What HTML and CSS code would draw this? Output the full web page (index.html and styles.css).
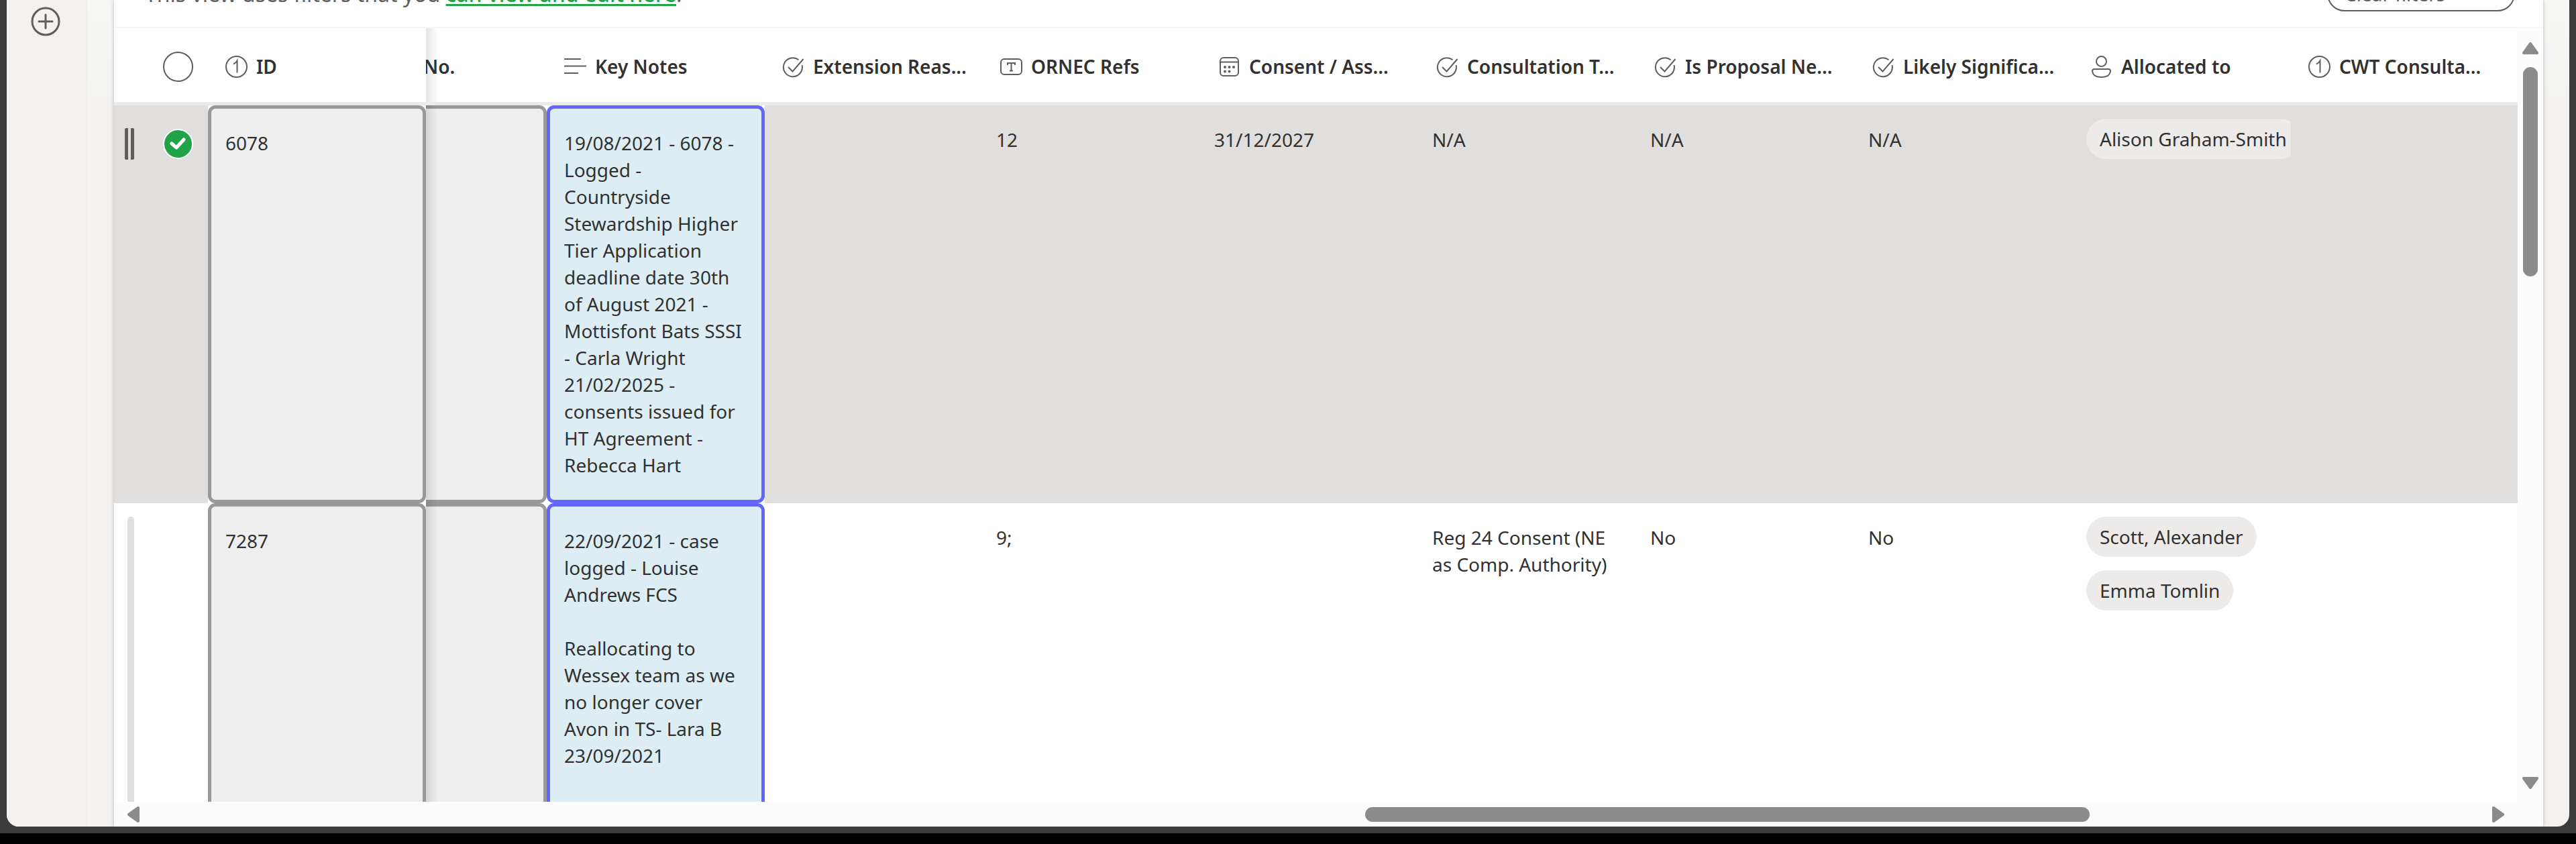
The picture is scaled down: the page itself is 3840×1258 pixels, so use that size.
FILE: index.html
```html
<!DOCTYPE html>
<html lang="en">
<head>
<meta charset="utf-8">
<title>Casework list</title>
<link rel="stylesheet" href="styles.css">
</head>
<body>
<svg class="defs" aria-hidden="true">
  <symbol id="i-number" viewBox="0 0 33 33"><circle cx="16.500" cy="16.500" r="15.500"/><path d="M12 12.500Q15.500 11 17.500 7.500V25.500"/></symbol>
  <symbol id="i-lines" viewBox="0 0 33 33"><path d="M0 5H25M0 15.500H33M0 26H21"/></symbol>
  <symbol id="i-choice" viewBox="0 0 33 33"><path d="M24.500 6.200A14 14 0 1 0 29.500 14M9 17l6.500 6.500L31.500 5"/></symbol>
  <symbol id="i-text" viewBox="0 0 33 33"><rect x="1" y="5" width="31" height="23" rx="5"/><path d="M11 14V11H22V14M16.500 11V22.500M14 22.500H19"/></symbol>
  <symbol id="i-date" viewBox="0 0 33 33"><rect x="3" y="3" width="27" height="27" rx="5"/><path d="M3 9.500H30"/><g class="dots"><circle cx="10" cy="17" r="2"/><circle cx="16.500" cy="17" r="2"/><circle cx="23" cy="17" r="2"/><circle cx="10" cy="23.500" r="2"/><circle cx="16.500" cy="23.500" r="2"/></g></symbol>
  <symbol id="i-person" viewBox="0 0 33 33"><circle cx="16.500" cy="8.500" r="7.500"/><path d="M6 20H27Q30 20 30 23Q29 32 16.500 32Q4 32 3 23Q3 20 6 20Z"/></symbol>
</svg>
<div class="window">
  <nav class="rail">
    <button class="add" aria-label="Add">
      <svg viewBox="0 0 44 44"><circle cx="22" cy="22" r="20"/><path d="M22 12V32M12 22H32"/></svg>
    </button>
  </nav>
  <main class="panel">
    <div class="filterbar">
      <p>This view uses filters that you <a href="#">can view and edit here</a>.</p>
      <button class="clear">Clear filters</button>
    </div>
    <div class="viewport">
      <div class="scroller">
        <table class="list">
          <colgroup>
            <col class="c-select"><col class="c-data"><col class="c-part"><col class="c-data"><col class="c-data"><col class="c-data"><col class="c-data"><col class="c-data"><col class="c-data"><col class="c-data"><col class="c-data"><col>
          </colgroup>
          <thead>
            <tr>
              <th><label class="pick"><input type="checkbox" aria-label="Select all"></label></th>
              <th><div class="head"><svg><use href="#i-number"/></svg><span>ID</span></div></th>
              <th class="under"><div class="head cut"><span>No.</span></div></th>
              <th><div class="head"><svg><use href="#i-lines"/></svg><span>Key Notes</span></div></th>
              <th><div class="head"><svg><use href="#i-choice"/></svg><span>Extension Reas...</span></div></th>
              <th><div class="head"><svg><use href="#i-text"/></svg><span>ORNEC Refs</span></div></th>
              <th><div class="head"><svg><use href="#i-date"/></svg><span>Consent / Ass...</span></div></th>
              <th><div class="head"><svg><use href="#i-choice"/></svg><span>Consultation T...</span></div></th>
              <th><div class="head"><svg><use href="#i-choice"/></svg><span>Is Proposal Ne...</span></div></th>
              <th><div class="head"><svg><use href="#i-choice"/></svg><span>Likely Significa...</span></div></th>
              <th><div class="head"><svg><use href="#i-person"/></svg><span>Allocated to</span></div></th>
              <th><div class="head"><svg><use href="#i-number"/></svg><span>CWT Consulta...</span></div></th>
            </tr>
          </thead>
          <tbody>
            <tr class="selected">
              <td class="tools"><div class="toolset"><span class="grip"></span><label class="pick"><input type="checkbox" checked aria-label="Select 6078"></label></div></td>
              <td class="box">6078</td>
              <td class="box flat under"></td>
              <td class="box notes">19/08/2021 - 6078 -<br>Logged -<br>Countryside<br>Stewardship Higher<br>Tier Application<br>deadline date 30th<br>of August 2021 -<br>Mottisfont Bats SSSI<br>- Carla Wright<br>21/02/2025 -<br>consents issued for<br>HT Agreement -<br>Rebecca Hart</td>
              <td></td>
              <td>12</td>
              <td>31/12/2027</td>
              <td>N/A</td>
              <td>N/A</td>
              <td>N/A</td>
              <td class="people"><div class="chips"><span class="chip">Alison Graham-Smith</span></div></td>
              <td></td>
            </tr>
            <tr>
              <td class="tools"><div class="bar"></div></td>
              <td class="box">7287</td>
              <td class="box flat under"></td>
              <td class="box notes">22/09/2021 - case<br>logged - Louise<br>Andrews FCS<br><br>Reallocating to<br>Wessex team as we<br>no longer cover<br>Avon in TS- Lara B<br>23/09/2021<br><br>View</td>
              <td></td>
              <td>9;</td>
              <td></td>
              <td>Reg 24 Consent (NE<br>as Comp. Authority)</td>
              <td>No</td>
              <td>No</td>
              <td class="people"><div class="chips"><span class="chip">Scott, Alexander</span><span class="chip">Emma Tomlin</span></div></td>
              <td></td>
            </tr>
          </tbody>
        </table>
      </div>
      <div class="vbar">
        <svg viewBox="0 0 24 18"><path d="M12 2L22 16H2Z"/></svg>
        <div class="thumb"></div>
        <svg viewBox="0 0 24 18"><path d="M12 16L22 2H2Z"/></svg>
      </div>
    </div>
    <div class="hbar">
      <svg viewBox="0 0 18 24"><path d="M2 12L16 2V22Z"/></svg>
      <div class="track"><div class="thumb"></div></div>
      <svg viewBox="0 0 18 24"><path d="M16 12L2 2V22Z"/></svg>
    </div>
  </main>
</div>
<div class="edge"></div>
</body>
</html>
```

FILE: styles.css
```css
* { box-sizing: border-box; }

body {
  margin: 0;
  height: 100vh;
  display: flex;
  flex-direction: column;
  overflow: hidden;
  background: #3b3b3b;
  color: #323130;
  font: 28px/40px "Noto Sans", "Open Sans", sans-serif;
}

.defs { display: none; }

svg { fill: none; stroke: #605e5c; stroke-width: 2; }

.window {
  flex: 1;
  min-height: 0;
  display: flex;
  margin: 0 10px 10px;
  padding-right: 39px;
  overflow: hidden;
  border-radius: 0 0 18px 18px;
  background: linear-gradient(#f7f7f6, #f3f2f1 160px);
}

.edge { height: 16px; background: #000; }

.rail {
  width: 120px;
  margin-right: 40px;
  border-right: 1px solid #e9e8e7;
  background: #f3f2f1;
}

.add {
  display: block;
  width: 44px;
  height: 44px;
  margin: 10px 36px;
  padding: 0;
  border: 0;
  background: none;
}

.add svg { display: block; stroke-width: 3; stroke-linecap: round; }

.panel {
  flex: 1;
  min-width: 0;
  display: flex;
  flex-direction: column;
  background: #fff;
  box-shadow: 0 0 6px rgba(0, 0, 0, .25);
}

/* The bar is scrolled partly out of view. */
.filterbar {
  display: flex;
  align-items: center;
  justify-content: space-between;
  flex: none;
  height: 100px;
  margin-top: -58px;
  padding: 0 42px 0 46px;
  border-bottom: 2px solid #f6f6f6;
}

.filterbar p { margin: 0; font-size: 32px; line-height: 40px; color: #605e5c; }
.filterbar a {
  color: #22a347;
  font-weight: 500;
  text-decoration-thickness: 3px;
  text-underline-offset: 3px;
}

.clear {
  width: 280px;
  height: 52px;
  padding: 0 24px;
  border: 2px solid #605e5c;
  border-radius: 26px;
  background: #fff;
  color: #605e5c;
  font: inherit;
  text-align: left;
}

.viewport { flex: 1; min-height: 0; display: flex; }
.scroller { flex: 1; min-width: 0; overflow: hidden; }

.list { width: 100%; table-layout: fixed; border-collapse: separate; border-spacing: 0; }
.c-select { width: 140px; }
.c-data { width: 325px; }
.c-part { width: 180px; }

th { height: 115px; padding: 4px 0 0; border-bottom: 5px solid #eaeaea; }
td { position: relative; padding: 31px 20px; vertical-align: top; }

.head {
  display: flex;
  align-items: center;
  gap: 13px;
  padding-left: 26px;
  font-weight: 600;
  white-space: nowrap;
}
.head svg { flex: none; width: 33px; height: 33px; }
.dots { fill: #605e5c; stroke: none; }
.cut { padding-left: 0; overflow: hidden; text-indent: -4px; }

.selected { background: #e0dfdd; }

.pick { display: flex; padding-left: 73px; }
.pick input {
  appearance: none;
  width: 45px;
  height: 45px;
  margin: 0;
  border: 2px solid #605e5c;
  border-radius: 50%;
}
.pick input:checked {
  border-color: #fff;
  background: #22a347 url("data:image/svg+xml,%3Csvg xmlns='http://www.w3.org/2000/svg' viewBox='0 0 41 41' fill='none' stroke='white' stroke-width='5' stroke-linecap='round' stroke-linejoin='round'%3E%3Cpath d='M11 20L18 26L29 14'/%3E%3C/svg%3E");
}

.tools { padding: 34px 0 0 16px; }
.toolset { display: flex; align-items: center; }
.toolset .pick { padding-left: 43px; }
.grip { width: 14px; height: 47px; border: solid #605e5c; border-width: 0 5px; border-radius: 2px; }
.bar {
  position: absolute;
  inset: 20px auto 0 20px;
  width: 10px;
  border-radius: 5px 5px 0 0;
  background: #e0dfdd;
}

.box { z-index: 0; padding: 36px 0 37px 26px; background: #fff; white-space: nowrap; }
.box::before {
  content: "";
  position: absolute;
  z-index: -1;
  inset: 0;
  border: 5px solid #999;
  border-radius: 11px;
  background: #eee;
}
.flat::before { border-left: 0; border-radius: 0 11px 11px 0; }
.notes::before { border-color: #6464ff; background: #dcedf3; }

/* Shadow that the frozen columns cast on the scrolled one. */
.under { position: relative; }
.under::after {
  content: "";
  position: absolute;
  inset: 0 auto 0 0;
  width: 18px;
  background: linear-gradient(90deg, rgba(0, 0, 0, .1), transparent);
}

.people { padding: 20px 0 0 20px; }
.chips { display: flex; flex-direction: column; align-items: flex-start; gap: 20px; overflow: hidden; }
.chip { padding: 10px 20px; border-radius: 30px; background: #edebe9; white-space: nowrap; }

.vbar {
  display: flex;
  flex-direction: column;
  align-items: center;
  width: 38px;
  padding: 21px 0 19px;
  background: #fcfcfc;
}
.vbar svg { width: 24px; height: 18px; }
.vbar svg:last-child { margin-top: auto; }
.vbar .thumb { width: 22px; height: 28%; margin-top: 19px; }

.thumb { border-radius: 11px; background: #8b8b8b; }
.vbar svg, .hbar svg { fill: #8b8b8b; stroke: #8b8b8b; stroke-width: 4; stroke-linejoin: round; }

.hbar {
  flex: none;
  display: flex;
  align-items: center;
  gap: 8px;
  height: 37px;
  padding: 0 58px 0 20px;
  background: #fcfcfc;
}
.hbar svg { width: 18px; height: 24px; }
.track { flex: 1; padding-left: 8px; }
.hbar .thumb { width: 31%; height: 22px; margin-left: 52%; }
```
